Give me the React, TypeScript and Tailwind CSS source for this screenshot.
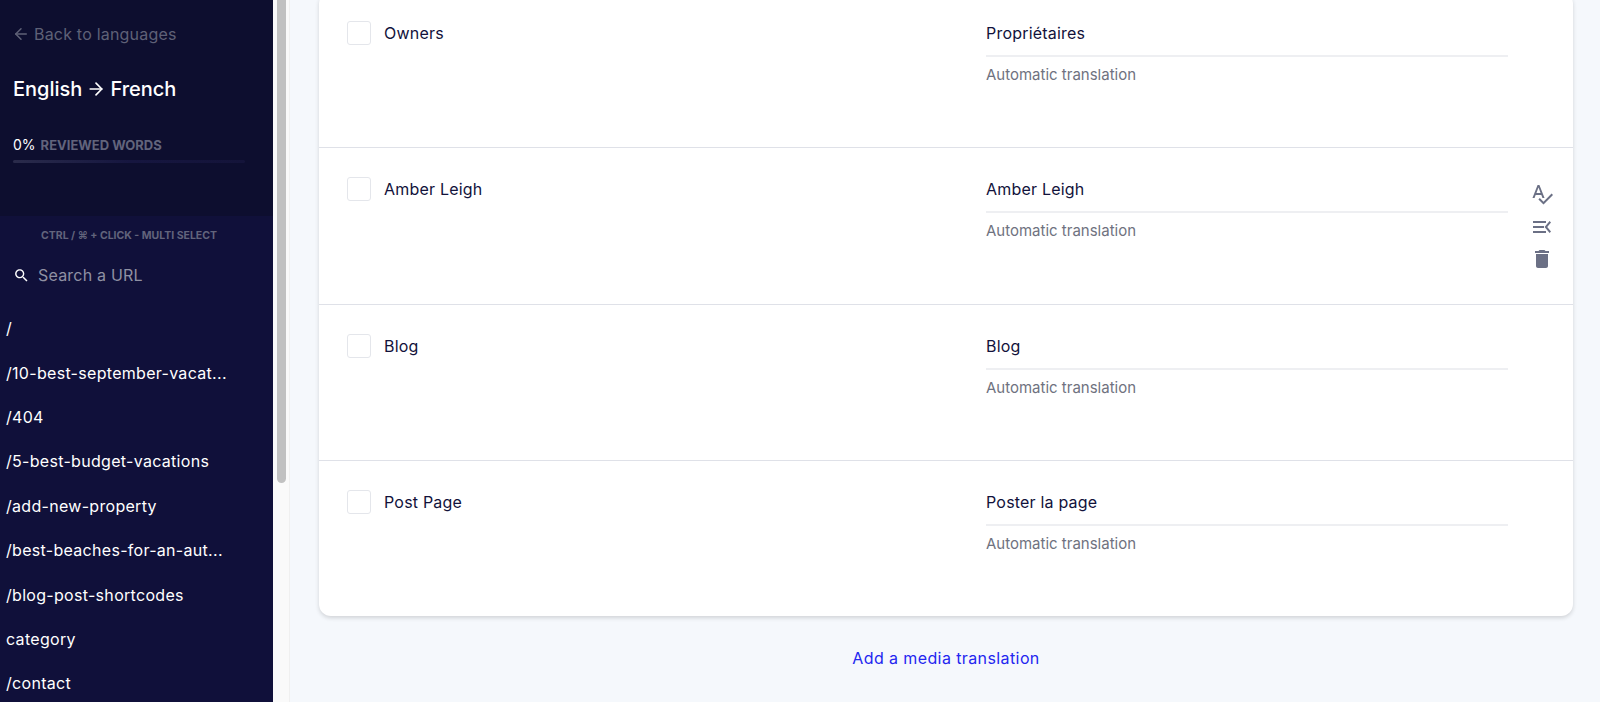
import React from 'react';
import { ArrowLeft, ArrowRight } from 'lucide-react';

const urls = [
  '/',
  '/10-best-september-vacat...',
  '/404',
  '/5-best-budget-vacations',
  '/add-new-property',
  '/best-beaches-for-an-aut...',
  '/blog-post-shortcodes',
  'category',
  '/contact',
];

const rows = [
  { source: 'Owners', target: 'Propriétaires' },
  { source: 'Amber Leigh', target: 'Amber Leigh', hovered: true },
  { source: 'Blog', target: 'Blog' },
  { source: 'Post Page', target: 'Poster la page' },
];

const RowActions = () => (
  <div className="absolute left-[1211px] top-[34px] flex flex-col items-center gap-[8.5px] text-[#6b7085]">
    <svg width="24" height="24" viewBox="0 0 24 24" fill="currentColor">
      <path d="M12.45 16h2.09L9.43 3H7.57L2.46 16h2.09l1.12-3h5.64l1.14 3zm-6.02-5L8.5 5.48 10.57 11H6.43zm15.16.59l-8.09 8.09L9.83 16l-1.41 1.41 5.09 5.09L23 13l-1.41-1.41z" />
    </svg>
    <svg width="24" height="24" viewBox="0 0 24 24" fill="currentColor">
      <path d="M3 6h13v2H3zM3 11h11v2H3zM3 16h13v2H3zM21 7.4 19.6 6 14.6 12l5 6 1.4-1.4L17.2 12z" />
    </svg>
    <svg width="24" height="24" viewBox="0 0 24 24" fill="currentColor">
      <path d="M6 19c0 1.1.9 2 2 2h8c1.1 0 2-.9 2-2V7H6v12zM19 4h-3.5l-1-1h-5l-1 1H5v2h14V4z" />
    </svg>
  </div>
);

const Row = ({ source, target, hovered }: { source: string; target: string; hovered?: boolean }) => (
  <div className="relative flex h-[156.3px] border-b border-[#dfe1e8] pl-[28px] pt-[29px] last:h-[155px] last:border-b-0">
    <div className="h-[24px] w-[24px] shrink-0 rounded-[3px] border border-[#e4e6eb] bg-white" />
    <div className="ml-[13px] w-[602px] shrink-0 text-[16px] leading-[24px] tracking-[0.2px] text-[#12123b]">{source}</div>
    <div className="w-[522px] shrink-0">
      <div className="border-b-2 border-[#eeeff2] pb-[10px] text-[16px] leading-[24px] tracking-[0.2px] text-[#12123b]">{target}</div>
      <div className="mt-[8px] text-[15px] leading-[20px] text-[#6f7280]">Automatic translation</div>
    </div>
    {hovered && <RowActions />}
  </div>
);

export default function App() {
  return (
    <div className="flex h-[702px] w-[1600px] overflow-hidden bg-[#f5f8fc] font-['Inter',sans-serif]">
      <aside className="flex h-full w-[273px] shrink-0 flex-col overflow-hidden bg-[#10103a]">
        <div className="h-[216px] shrink-0 bg-[#0d0e2f] pl-[13px] pt-[23px]">
          <div className="flex h-[22px] items-center text-[16px] tracking-[0.2px] text-[#5f6177]">
            <ArrowLeft size={18} className="mr-[4px] -ml-[1px]" />
            Back to languages
          </div>
          <div className="mt-[30px] flex items-center text-[20px] leading-[28px] font-medium text-white">
            English
            <ArrowRight size={20} className="mx-[4px]" />
            French
          </div>
          <div className="mt-[32px] flex items-baseline text-[14px] leading-[20px] text-white">
            0%
            <span className="ml-[5px] text-[13px] font-bold text-[#62647c]">REVIEWED WORDS</span>
          </div>
          <div className="mt-[5px] h-[3px] w-[232px] rounded-full bg-gradient-to-r from-[#2a2b4b] via-[#161640] to-[#14143a]" />
        </div>
        <div className="mt-[14px] pr-[15px] text-center text-[10.5px] leading-[12px] font-bold text-[#62647c]">
          CTRL / ⌘ + CLICK - MULTI SELECT
        </div>
        <div className="mt-[21px] flex h-[24px] items-center pl-[13px] text-[16px] tracking-[0.2px] text-[#8f90a3]">
          <svg width="17" height="17" viewBox="0 0 24 24" fill="white" className="mr-[8px]">
            <path d="M15.5 14h-.79l-.28-.27C15.41 12.59 16 11.11 16 9.5 16 5.91 13.09 3 9.5 3S3 5.91 3 9.5 5.91 16 9.5 16c1.61 0 3.09-.59 4.23-1.57l.27.28v.79l5 4.99L20.49 19l-4.99-5zm-6 0C7.01 14 5 11.99 5 9.5S7.01 5 9.5 5 14 7.01 14 9.5 11.99 14 9.5 14z" />
          </svg>
          Search a URL
        </div>
        <ul className="mt-[19px]">
          {urls.map((url) => (
            <li key={url} className="flex h-[44.4px] shrink-0 items-center whitespace-nowrap pl-[6px] text-[16px] tracking-[0.3px] text-white">
              {url}
            </li>
          ))}
        </ul>
      </aside>

      <div className="w-[17px] shrink-0 border-r border-[#f0f0f0] bg-[#fafafa]">
        <div className="mx-auto h-[483px] w-[9px] rounded-b-[5px] bg-[#c1c1c1]" />
      </div>

      <main className="flex-1 pl-[29px] pr-[27px]">
        <div className="-mt-[8px] rounded-[12px] bg-white shadow-[0_2px_4px_rgba(0,0,0,0.15)]">
          {rows.map((row) => (
            <Row key={row.source} {...row} />
          ))}
        </div>
        <div className="mt-[30px] w-[1254px] text-center text-[16px] leading-[24px] tracking-[0.4px] text-[#2326f0]">
          Add a media translation
        </div>
      </main>
    </div>
  );
}
